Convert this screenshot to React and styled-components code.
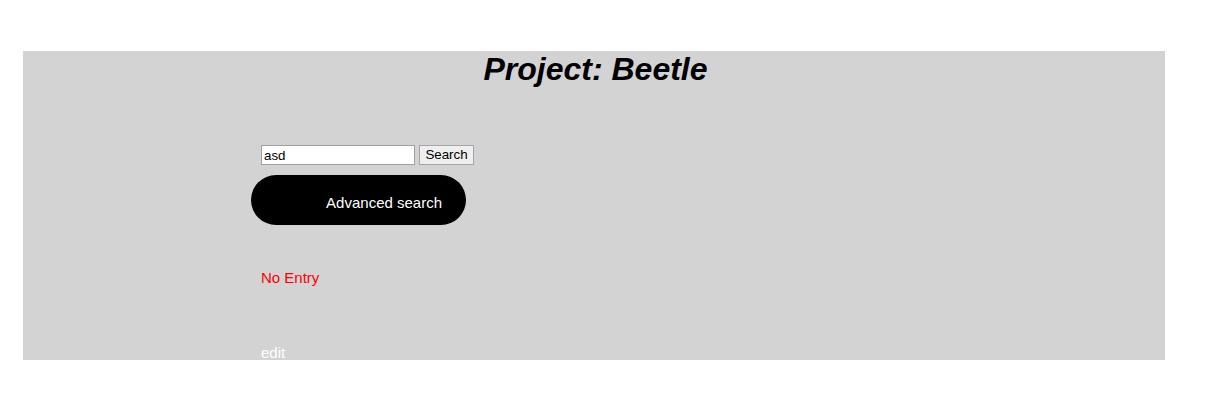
import React from "react";
import styled, { createGlobalStyle } from "styled-components";

const Global = createGlobalStyle`
  html, body { margin: 0; padding: 0; background: #fff; }
  body { font-family: "Liberation Sans", Arial, sans-serif; }
`;

const Panel = styled.div`
  margin: 51px 0 0 23px;
  width: 1142px;
  height: 309px;
  background: #d3d3d3;
  overflow: hidden;
  display: flex;
  flex-direction: column;
`;

const Title = styled.h1`
  margin: 0 0 0 3px;
  font-size: 32px;
  line-height: 37px;
  font-style: italic;
  font-weight: bold;
  text-align: center;
  color: #000;
`;

const Content = styled.div`
  padding-left: 228px;
  display: flex;
  flex-direction: column;
  align-items: flex-start;
`;

const SearchRow = styled.form`
  margin: 57px 0 0 10px;
  display: flex;
  gap: 4px;
  align-items: center;
`;

const Input = styled.input`
  box-sizing: border-box;
  width: 154px;
  height: 20px;
  border: 1px solid #a0a0a0;
  padding: 0 2px;
  font-family: "Liberation Sans", Arial, sans-serif;
  font-size: 13.33px;
  color: #000;
  background: #fff;
  outline: none;
`;

const Button = styled.button`
  box-sizing: border-box;
  width: 55px;
  height: 20px;
  border: 1px solid #a6a6a6;
  background: #efefef;
  font-family: "Liberation Sans", Arial, sans-serif;
  font-size: 13.33px;
  color: #000;
  padding: 0 0 1px;
`;

const AdvancedButton = styled.button`
  box-sizing: border-box;
  margin-top: 10px;
  width: 215px;
  height: 50px;
  border: none;
  border-radius: 25px;
  background: #000;
  color: #fff;
  font-family: "Liberation Sans", Arial, sans-serif;
  font-size: 15px;
  text-align: right;
  padding: 4px 24px 0 0;
`;

const Message = styled.div`
  margin: 44px 0 0 10px;
  font-size: 15px;
  line-height: 17px;
  color: #ff0000;
`;

const EditLink = styled.a`
  margin: 58px 0 0 10px;
  font-size: 15px;
  line-height: 17px;
  color: #fff;
  text-decoration: none;
`;

export default function App() {
  return (
    <>
      <Global />
      <Panel>
        <Title>Project: Beetle</Title>
        <Content>
          <SearchRow onSubmit={(e) => e.preventDefault()}>
            <Input defaultValue="asd" />
            <Button type="submit">Search</Button>
          </SearchRow>
          <AdvancedButton>Advanced search</AdvancedButton>
          <Message>No Entry</Message>
          <EditLink href="#">edit</EditLink>
        </Content>
      </Panel>
    </>
  );
}
